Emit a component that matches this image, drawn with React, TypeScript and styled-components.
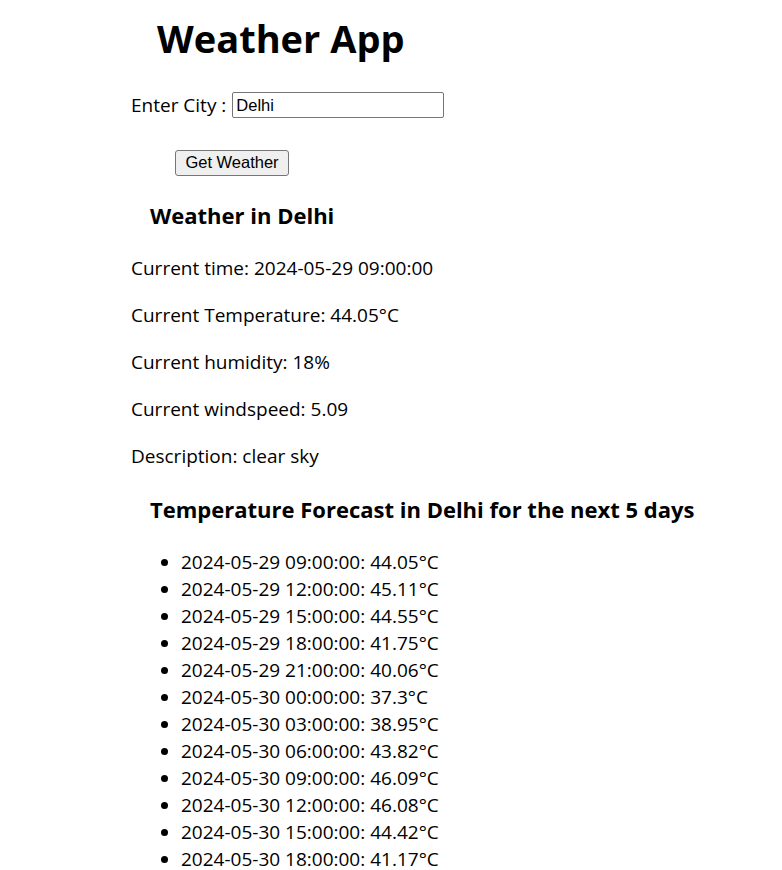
import React from 'react'
import styled, { createGlobalStyle } from 'styled-components'

type ForecastItem = {
  time: string
  temp: number
}

const forecast: ForecastItem[] = [
  { time: '2024-05-29 09:00:00', temp: 44.05 },
  { time: '2024-05-29 12:00:00', temp: 45.11 },
  { time: '2024-05-29 15:00:00', temp: 44.55 },
  { time: '2024-05-29 18:00:00', temp: 41.75 },
  { time: '2024-05-29 21:00:00', temp: 40.06 },
  { time: '2024-05-30 00:00:00', temp: 37.3 },
  { time: '2024-05-30 03:00:00', temp: 38.95 },
  { time: '2024-05-30 06:00:00', temp: 43.82 },
  { time: '2024-05-30 09:00:00', temp: 46.09 },
  { time: '2024-05-30 12:00:00', temp: 46.08 },
  { time: '2024-05-30 15:00:00', temp: 44.42 },
  { time: '2024-05-30 18:00:00', temp: 41.17 },
]

export default function App() {
  const city = 'Delhi'
  return (
    <>
      <GlobalStyle />
      <Page>
        <Title>Weather App</Title>
        <CityRow>
          <Label htmlFor="city">Enter City :</Label>
          <CityInput id="city" type="text" defaultValue={city} />
        </CityRow>
        <ButtonRow>
          <FetchButton type="button">Get Weather</FetchButton>
        </ButtonRow>
        <SectionTitle>Weather in {city}</SectionTitle>
        <Info>Current time: 2024-05-29 09:00:00</Info>
        <Info>Current Temperature: 44.05°C</Info>
        <Info>Current humidity: 18%</Info>
        <Info>Current windspeed: 5.09</Info>
        <Info>Description: clear sky</Info>
        <SectionTitle>Temperature Forecast in {city} for the next 5 days</SectionTitle>
        <ForecastList>
          {forecast.map((item) => (
            <li key={item.time}>
              {item.time}: {item.temp}°C
            </li>
          ))}
        </ForecastList>
      </Page>
    </>
  )
}

const GlobalStyle = createGlobalStyle`
  body {
    margin: 0;
    background: #fff;
    color: #000;
    font-family: 'Open Sans', 'Noto Sans', sans-serif;
  }
`

const Page = styled.div`
  padding: 12px 0 0 131px;
  font-size: 19px;
  line-height: 27px;
`

const Title = styled.h1`
  margin: 0 0 0 26px;
  font-size: 38px;
  line-height: 53px;
  font-weight: 700;
`

const CityRow = styled.div`
  display: flex;
  align-items: center;
  gap: 6px;
  height: 28px;
  margin-top: 26px;
`

const Label = styled.label``

const CityInput = styled.input`
  box-sizing: border-box;
  width: 212px;
  height: 26px;
  padding: 1px 3px;
  border: 1px solid #767676;
  border-radius: 2px;
  font-family: 'Liberation Sans', Arial, sans-serif;
  font-size: 16.5px;
  color: #000;
`

const ButtonRow = styled.div`
  margin: 29px 0 0 44px;
`

const FetchButton = styled.button`
  box-sizing: border-box;
  height: 26px;
  width: 114px;
  padding: 0 8px;
  border: 1px solid #767676;
  border-radius: 3px;
  background: #efefef;
  font-family: 'Liberation Sans', Arial, sans-serif;
  font-size: 16.5px;
  color: #000;
`

const SectionTitle = styled.h3`
  margin: 24px 0 0 19px;
  font-size: 22px;
  line-height: 31px;
  font-weight: 700;
`

const Info = styled.p`
  margin: 24px 0 0;
  & + & {
    margin-top: 20px;
  }
`

const ForecastList = styled.ul`
  margin: 24px 0 0;
  padding-left: 50px;
`
